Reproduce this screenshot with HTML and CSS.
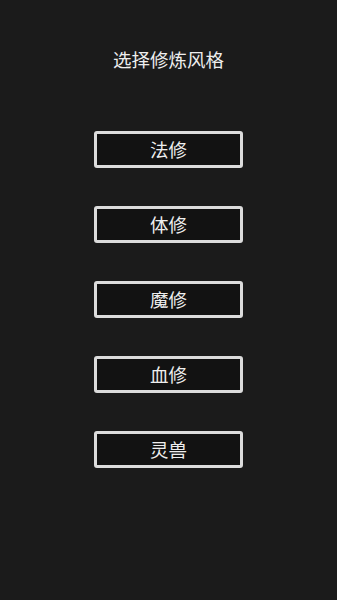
FILE: index.html
```html
<!DOCTYPE html>
<html lang="zh-CN">
<head>
    <meta charset="UTF-8">
    <meta name="viewport" content="width=device-width, initial-scale=1.0">
    <title>选择修炼风格</title>
    <link rel="stylesheet" href="styles.css">
</head>
<body>
    <div class="screen">
        <h2 class="title">选择修炼风格</h2>
        <div class="style-list">
            <button class="style-btn">法修</button>
            <button class="style-btn">体修</button>
            <button class="style-btn">魔修</button>
            <button class="style-btn">血修</button>
            <button class="style-btn">灵兽</button>
        </div>
    </div>
</body>
</html>
```

FILE: styles.css
```css
* {
    margin: 0;
    padding: 0;
    box-sizing: border-box;
    font-family: 'Noto Sans CJK SC', 'Noto Sans', sans-serif;
}

body {
    background: #1b1b1b;
    min-height: 100vh;
}

.screen {
    display: flex;
    flex-direction: column;
    align-items: center;
    padding-top: 47px;
}

.title {
    color: #eee;
    font-size: 18.5px;
    font-weight: 400;
    line-height: 24px;
    margin-bottom: 60px;
}

.style-list {
    display: flex;
    flex-direction: column;
    gap: 38px;
}

.style-btn {
    width: 149px;
    height: 37px;
    background: #121212;
    border: 3px solid #dcdcdc;
    border-radius: 3px;
    color: #eee;
    font-size: 18.5px;
    line-height: 1;
    cursor: pointer;
}
```
